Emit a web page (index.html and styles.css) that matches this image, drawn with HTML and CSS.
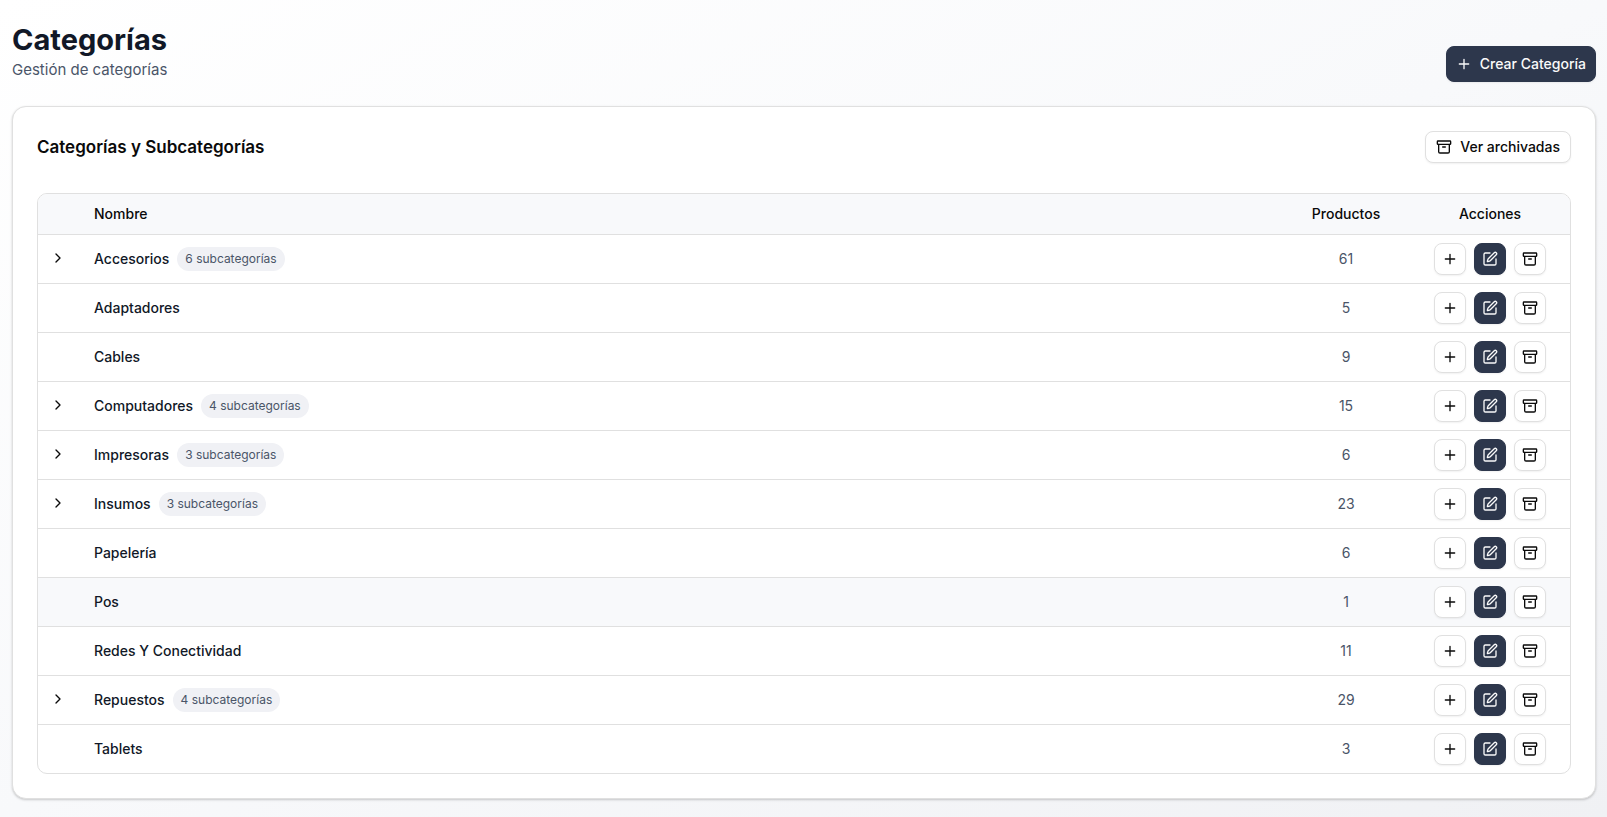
FILE: index.html
```html
<!DOCTYPE html>
<html lang="es">
<head>
    <meta charset="UTF-8">
    <meta name="viewport" content="width=device-width, initial-scale=1.0">
    <title>Categorías</title>
    <link rel="stylesheet" href="styles.css">
</head>
<body>

    <svg class="sprite" aria-hidden="true">
        <symbol id="plus" viewBox="0 0 24 24"><path d="M5 12h14M12 5v14"/></symbol>
        <symbol id="chevron" viewBox="0 0 24 24"><path d="m9 18 6-6-6-6"/></symbol>
        <symbol id="edit" viewBox="0 0 24 24">
            <path d="M12 3H5a2 2 0 0 0-2 2v14a2 2 0 0 0 2 2h14a2 2 0 0 0 2-2v-7"/>
            <path d="M18.375 2.625a1 1 0 0 1 3 3l-9.013 9.014a2 2 0 0 1-.853.505l-2.873.84a.5.5 0 0 1-.62-.62l.84-2.873a2 2 0 0 1 .506-.852z"/>
        </symbol>
        <symbol id="archive" viewBox="0 0 24 24">
            <rect width="20" height="5" x="2" y="3" rx="1"/>
            <path d="M4 8v11a2 2 0 0 0 2 2h12a2 2 0 0 0 2-2V8M10 12h4"/>
        </symbol>
    </svg>

    <header class="page-header">
        <div>
            <h1>Categorías</h1>
            <p>Gestión de categorías</p>
        </div>
        <button class="btn btn-primary btn-create"><svg class="icon"><use href="#plus"/></svg>Crear Categoría</button>
    </header>

    <main class="card">
        <div class="card-header">
            <h2>Categorías y Subcategorías</h2>
            <button class="btn"><svg class="icon"><use href="#archive"/></svg>Ver archivadas</button>
        </div>

        <div class="table-wrap">
            <table>
                <thead>
                    <tr>
                        <th class="col-toggle"></th>
                        <th class="col-name">Nombre</th>
                        <th class="col-products">Productos</th>
                        <th class="col-actions">Acciones</th>
                    </tr>
                </thead>
                <tbody>
                    <tr>
                        <td><button class="toggle" aria-label="Expandir"><svg class="icon"><use href="#chevron"/></svg></button></td>
                        <td class="col-name"><div class="name">Accesorios <span class="badge">6 subcategorías</span></div></td>
                        <td class="count">61</td>
                        <td><div class="actions"><button class="btn btn-icon" aria-label="Agregar"><svg class="icon"><use href="#plus"/></svg></button><button class="btn btn-icon btn-primary" aria-label="Editar"><svg class="icon"><use href="#edit"/></svg></button><button class="btn btn-icon" aria-label="Archivar"><svg class="icon"><use href="#archive"/></svg></button></div></td>
                    </tr>
                    <tr>
                        <td></td>
                        <td class="col-name">Adaptadores</td>
                        <td class="count">5</td>
                        <td><div class="actions"><button class="btn btn-icon" aria-label="Agregar"><svg class="icon"><use href="#plus"/></svg></button><button class="btn btn-icon btn-primary" aria-label="Editar"><svg class="icon"><use href="#edit"/></svg></button><button class="btn btn-icon" aria-label="Archivar"><svg class="icon"><use href="#archive"/></svg></button></div></td>
                    </tr>
                    <tr>
                        <td></td>
                        <td class="col-name">Cables</td>
                        <td class="count">9</td>
                        <td><div class="actions"><button class="btn btn-icon" aria-label="Agregar"><svg class="icon"><use href="#plus"/></svg></button><button class="btn btn-icon btn-primary" aria-label="Editar"><svg class="icon"><use href="#edit"/></svg></button><button class="btn btn-icon" aria-label="Archivar"><svg class="icon"><use href="#archive"/></svg></button></div></td>
                    </tr>
                    <tr>
                        <td><button class="toggle" aria-label="Expandir"><svg class="icon"><use href="#chevron"/></svg></button></td>
                        <td class="col-name"><div class="name">Computadores <span class="badge">4 subcategorías</span></div></td>
                        <td class="count">15</td>
                        <td><div class="actions"><button class="btn btn-icon" aria-label="Agregar"><svg class="icon"><use href="#plus"/></svg></button><button class="btn btn-icon btn-primary" aria-label="Editar"><svg class="icon"><use href="#edit"/></svg></button><button class="btn btn-icon" aria-label="Archivar"><svg class="icon"><use href="#archive"/></svg></button></div></td>
                    </tr>
                    <tr>
                        <td><button class="toggle" aria-label="Expandir"><svg class="icon"><use href="#chevron"/></svg></button></td>
                        <td class="col-name"><div class="name">Impresoras <span class="badge">3 subcategorías</span></div></td>
                        <td class="count">6</td>
                        <td><div class="actions"><button class="btn btn-icon" aria-label="Agregar"><svg class="icon"><use href="#plus"/></svg></button><button class="btn btn-icon btn-primary" aria-label="Editar"><svg class="icon"><use href="#edit"/></svg></button><button class="btn btn-icon" aria-label="Archivar"><svg class="icon"><use href="#archive"/></svg></button></div></td>
                    </tr>
                    <tr>
                        <td><button class="toggle" aria-label="Expandir"><svg class="icon"><use href="#chevron"/></svg></button></td>
                        <td class="col-name"><div class="name">Insumos <span class="badge">3 subcategorías</span></div></td>
                        <td class="count">23</td>
                        <td><div class="actions"><button class="btn btn-icon" aria-label="Agregar"><svg class="icon"><use href="#plus"/></svg></button><button class="btn btn-icon btn-primary" aria-label="Editar"><svg class="icon"><use href="#edit"/></svg></button><button class="btn btn-icon" aria-label="Archivar"><svg class="icon"><use href="#archive"/></svg></button></div></td>
                    </tr>
                    <tr>
                        <td></td>
                        <td class="col-name">Papelería</td>
                        <td class="count">6</td>
                        <td><div class="actions"><button class="btn btn-icon" aria-label="Agregar"><svg class="icon"><use href="#plus"/></svg></button><button class="btn btn-icon btn-primary" aria-label="Editar"><svg class="icon"><use href="#edit"/></svg></button><button class="btn btn-icon" aria-label="Archivar"><svg class="icon"><use href="#archive"/></svg></button></div></td>
                    </tr>
                    <tr class="active">
                        <td></td>
                        <td class="col-name">Pos</td>
                        <td class="count">1</td>
                        <td><div class="actions"><button class="btn btn-icon" aria-label="Agregar"><svg class="icon"><use href="#plus"/></svg></button><button class="btn btn-icon btn-primary" aria-label="Editar"><svg class="icon"><use href="#edit"/></svg></button><button class="btn btn-icon" aria-label="Archivar"><svg class="icon"><use href="#archive"/></svg></button></div></td>
                    </tr>
                    <tr>
                        <td></td>
                        <td class="col-name">Redes Y Conectividad</td>
                        <td class="count">11</td>
                        <td><div class="actions"><button class="btn btn-icon" aria-label="Agregar"><svg class="icon"><use href="#plus"/></svg></button><button class="btn btn-icon btn-primary" aria-label="Editar"><svg class="icon"><use href="#edit"/></svg></button><button class="btn btn-icon" aria-label="Archivar"><svg class="icon"><use href="#archive"/></svg></button></div></td>
                    </tr>
                    <tr>
                        <td><button class="toggle" aria-label="Expandir"><svg class="icon"><use href="#chevron"/></svg></button></td>
                        <td class="col-name"><div class="name">Repuestos <span class="badge">4 subcategorías</span></div></td>
                        <td class="count">29</td>
                        <td><div class="actions"><button class="btn btn-icon" aria-label="Agregar"><svg class="icon"><use href="#plus"/></svg></button><button class="btn btn-icon btn-primary" aria-label="Editar"><svg class="icon"><use href="#edit"/></svg></button><button class="btn btn-icon" aria-label="Archivar"><svg class="icon"><use href="#archive"/></svg></button></div></td>
                    </tr>
                    <tr>
                        <td></td>
                        <td class="col-name">Tablets</td>
                        <td class="count">3</td>
                        <td><div class="actions"><button class="btn btn-icon" aria-label="Agregar"><svg class="icon"><use href="#plus"/></svg></button><button class="btn btn-icon btn-primary" aria-label="Editar"><svg class="icon"><use href="#edit"/></svg></button><button class="btn btn-icon" aria-label="Archivar"><svg class="icon"><use href="#archive"/></svg></button></div></td>
                    </tr>
                </tbody>
            </table>
        </div>
    </main>

</body>
</html>
```
FILE: styles.css
```css
* {
    margin: 0;
    padding: 0;
    box-sizing: border-box;
}

body {
    min-height: 100vh;
    padding: 22px 11px 18px 12px;
    font-family: Inter, sans-serif;
    font-size: 14px;
    line-height: 20px;
    color: #0a0a0a;
    background: linear-gradient(to bottom right, #ffffff, #f8f9fb 50%, #f0f1f4);
}

.sprite {
    display: none;
}

.icon {
    width: 16px;
    height: 16px;
    flex-shrink: 0;
    fill: none;
    stroke: currentColor;
    stroke-width: 2;
    stroke-linecap: round;
    stroke-linejoin: round;
}

.page-header {
    display: flex;
    justify-content: space-between;
    align-items: flex-end;
    margin-bottom: 24px;
}

h1 {
    font-size: 29px;
    line-height: 36px;
    font-weight: 700;
    color: #111827;
}

.page-header p {
    font-size: 15px;
    line-height: 24px;
    color: #4a5568;
}

.card {
    padding: 24px;
    background: white;
    border: 1px solid #e0e0e0;
    border-radius: 14px;
    box-shadow: 0 1px 3px rgba(0, 0, 0, 0.1), 0 1px 2px rgba(0, 0, 0, 0.1);
}

.card-header {
    display: flex;
    justify-content: space-between;
    align-items: center;
    margin-bottom: 30px;
}

h2 {
    font-size: 17px;
    line-height: 28px;
    font-weight: 600;
}

.btn {
    display: flex;
    align-items: center;
    justify-content: center;
    gap: 8px;
    height: 32px;
    padding: 0 10px;
    font: inherit;
    font-weight: 500;
    color: #0a0a0a;
    background: white;
    border: 1px solid #e0e0e0;
    border-radius: 8px;
    box-shadow: 0 1px 2px rgba(0, 0, 0, 0.06);
    cursor: pointer;
}

.btn-primary {
    color: #fafafa;
    background: #2d374c;
    border-color: #2d374c;
}

.btn-create {
    height: 36px;
    padding: 0 9px;
}

.btn-icon {
    width: 32px;
    padding: 0;
}

.table-wrap {
    border: 1px solid #e0e0e0;
    border-radius: 10px;
    overflow: hidden;
}

table {
    width: 100%;
    table-layout: fixed;
    border-collapse: separate;
    border-spacing: 0;
}

th, td {
    text-align: center;
    vertical-align: middle;
    border-bottom: 1px solid #e0e0e0;
}

th {
    height: 41px;
    font-weight: 500;
    background: #f8f9fb;
}

td {
    height: 49px;
    font-weight: 500;
    color: #111827;
}

tbody tr:last-child td {
    height: 48px;
    border-bottom: none;
}

tr.active,
tbody tr:hover {
    background: #f8f9fb;
}

.col-toggle {
    width: 40px;
}

.col-name {
    padding-left: 16px;
    text-align: left;
}

.col-products {
    width: 128px;
}

.col-actions {
    width: 160px;
}

.name {
    display: flex;
    align-items: center;
    gap: 8px;
}

.badge {
    padding: 4px 8px;
    font-size: 12px;
    line-height: 16px;
    font-weight: 400;
    color: #4a5568;
    background: #f0f1f5;
    border-radius: 12px;
}

.count {
    font-weight: 400;
    color: #4a5568;
}

.toggle {
    display: block;
    width: 16px;
    height: 16px;
    margin: 0 auto 2px;
    color: #0a0a0a;
    background: none;
    border: none;
    cursor: pointer;
}

.actions {
    display: flex;
    justify-content: center;
    gap: 8px;
}
```
